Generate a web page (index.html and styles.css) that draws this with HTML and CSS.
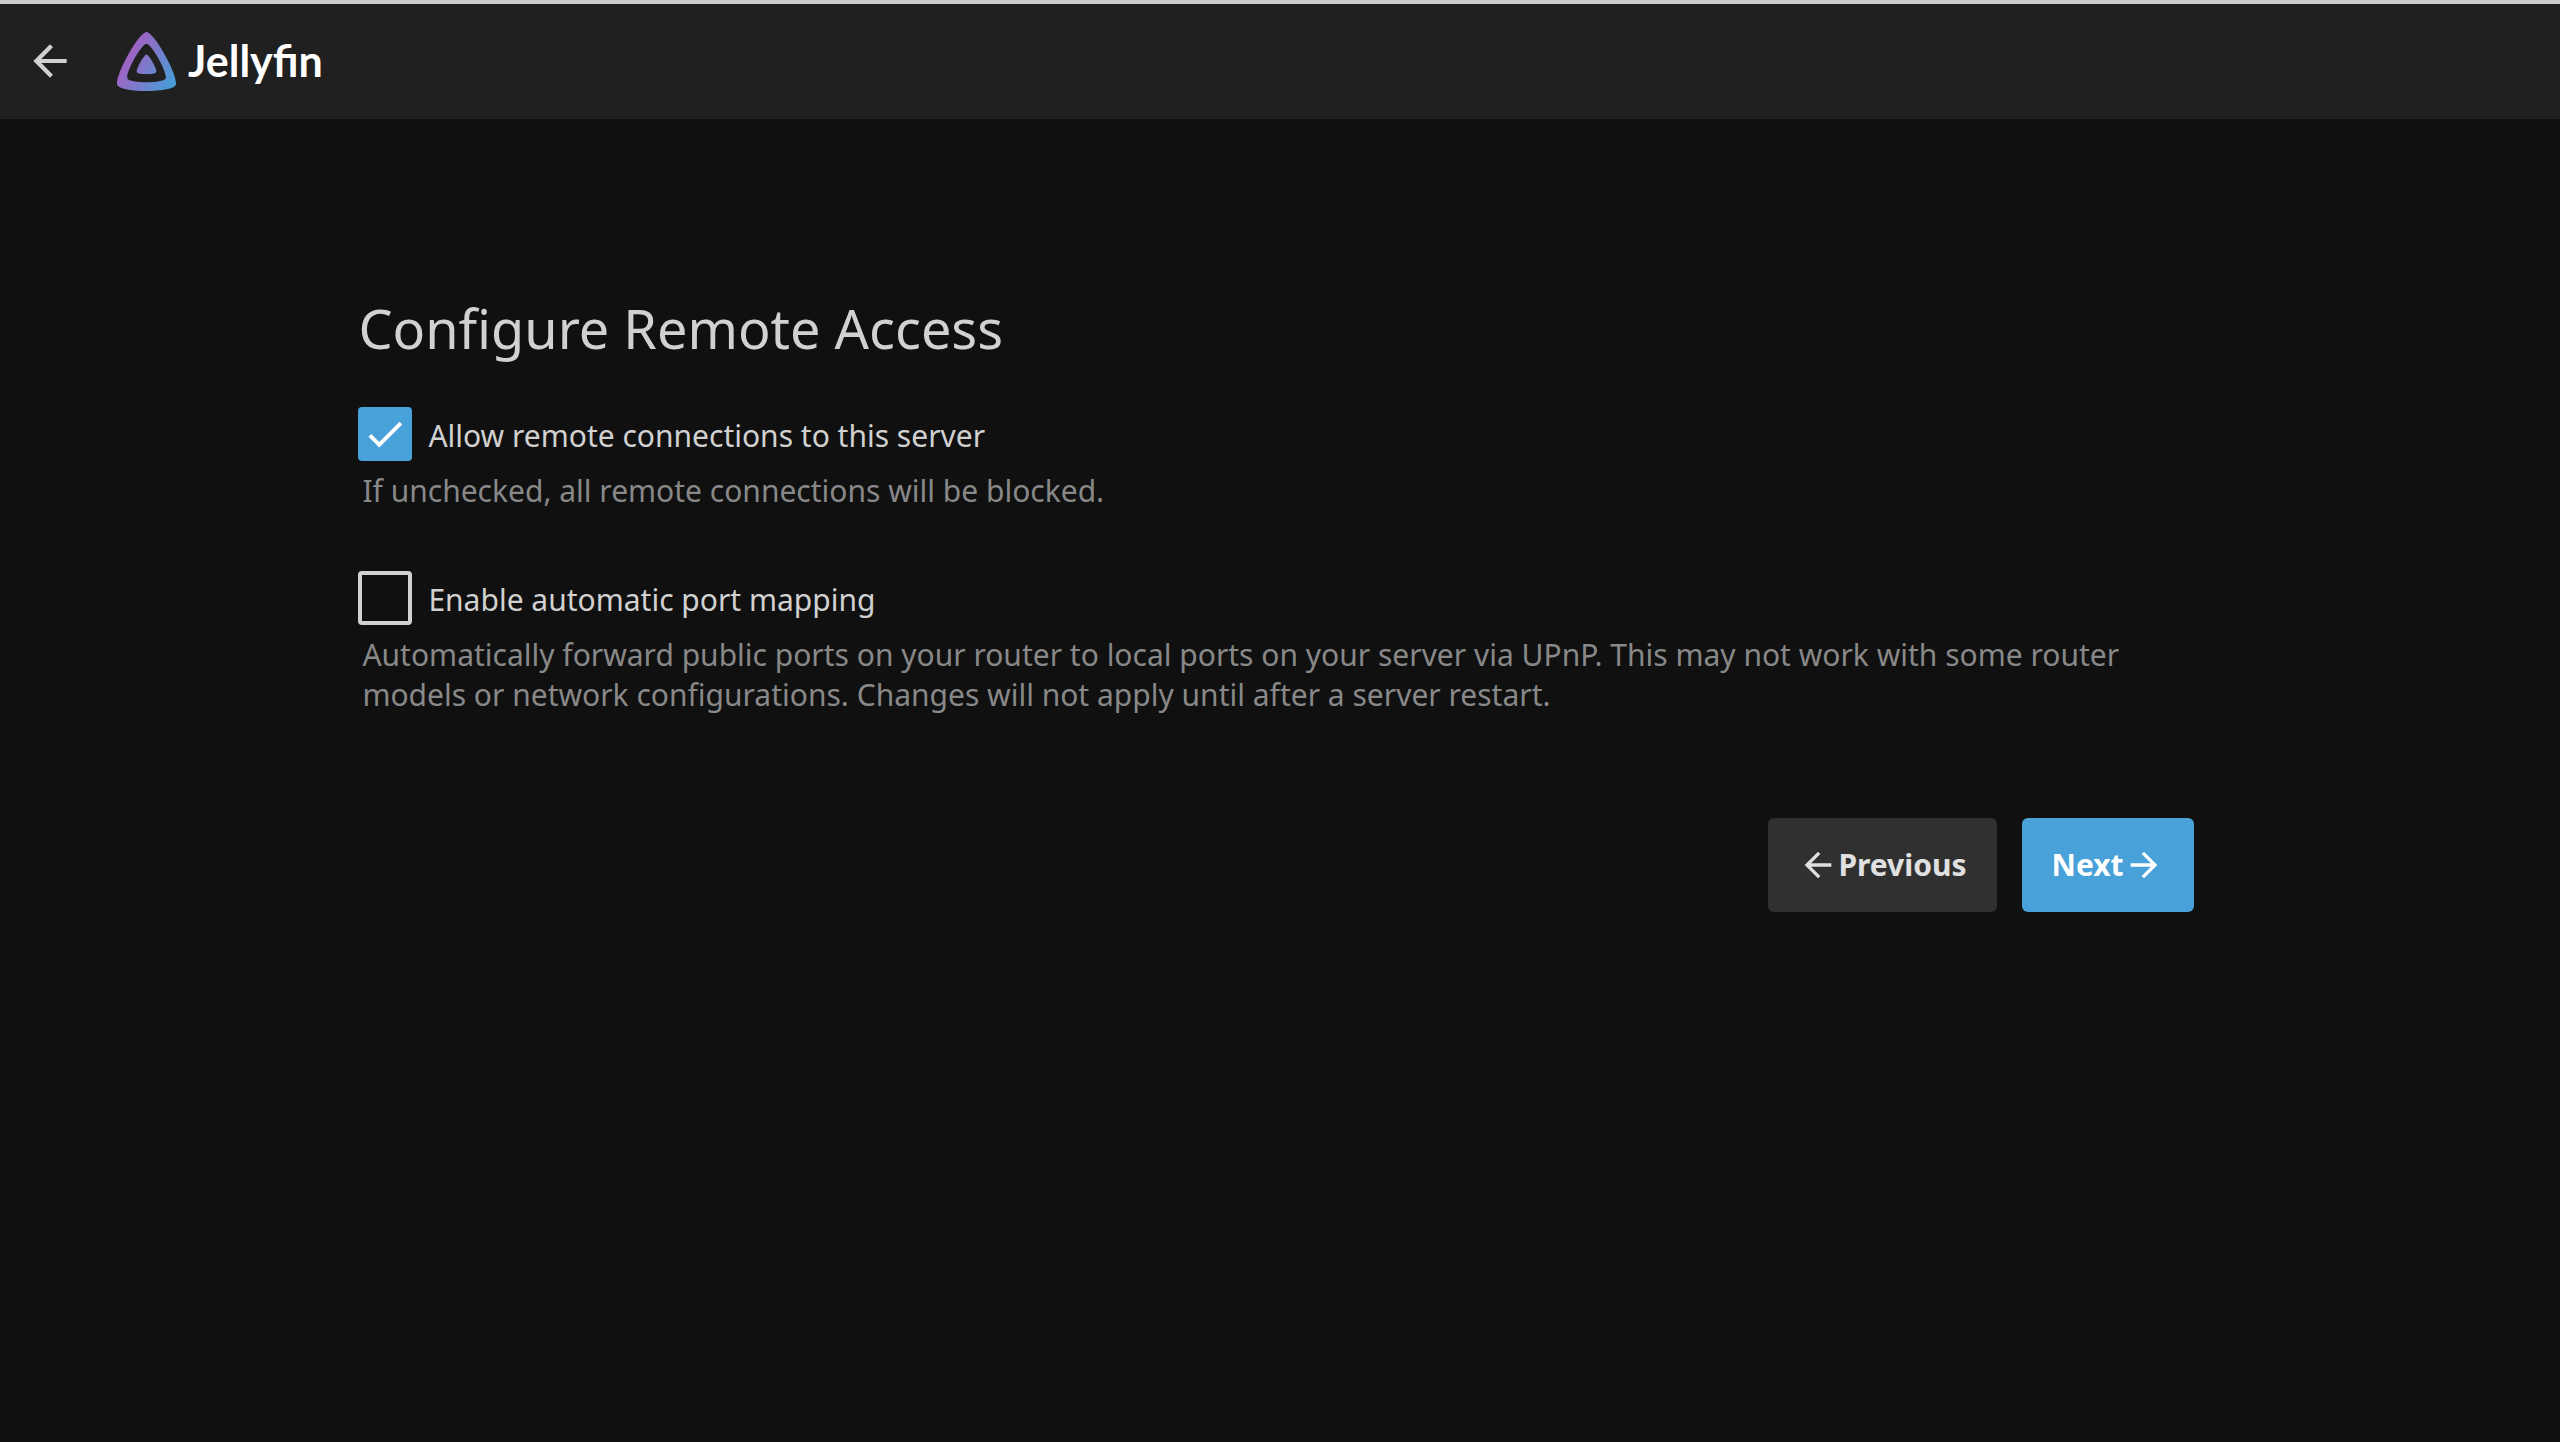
FILE: index.html
```html
<!DOCTYPE html>
<html lang="en">
<head>
<meta charset="utf-8">
<title>Jellyfin</title>
<meta name="viewport" content="width=device-width, initial-scale=1">
<link rel="stylesheet" href="styles.css">
</head>
<body>
<header class="header">
  <button class="back" type="button" aria-label="Back">
    <svg class="back-icon" viewBox="0 0 24 24" aria-hidden="true"><path d="M20 11H7.83l5.59-5.59L12 4l-8 8 8 8 1.41-1.41L7.83 13H20v-2z"/></svg>
  </button>
  <a class="brand" href="#">
    <svg class="brand-icon" viewBox="56 56 400 400" aria-hidden="true">
      <defs>
        <linearGradient id="brand-gradient" gradientUnits="userSpaceOnUse" x1="110.25" y1="213.3" x2="496.14" y2="436.09">
          <stop offset="0" stop-color="#a55fc2"/>
          <stop offset="1" stop-color="#38a7dc"/>
        </linearGradient>
      </defs>
      <path fill="url(#brand-gradient)" d="M190.56 329.07c8.63 17.3 122.4 17.12 130.93 0 8.52-17.1-47.9-119.78-65.46-119.8-17.57 0-74.1 102.5-65.47 119.8z"/>
      <path fill="url(#brand-gradient)" d="M58.75 417.03c25.97 52.15 368.86 51.55 394.55 0S308.93 56.08 256.03 56.08c-52.92 0-223.25 308.8-197.28 360.95zm68.04-45.25c-17.02-34.17 94.6-236.5 129.26-236.5 34.67 0 146.1 202.7 129.26 236.5-16.83 33.8-241.5 34.17-258.52 0z"/>
    </svg>
    <span class="brand-name">Jellyfin</span>
  </a>
</header>
<main class="page">
  <form class="wizard">
    <h1 class="title">Configure Remote Access</h1>
    <div class="field">
      <label class="option">
        <input class="option-input" type="checkbox" checked aria-describedby="remote-help">
        <span class="option-box"><svg class="option-check" viewBox="0 0 24 24" aria-hidden="true"><path d="M9 16.17L4.83 12l-1.42 1.41L9 19 21 7l-1.41-1.41z"/></svg></span>
        <span class="option-label">Allow remote connections to this server</span>
      </label>
      <p class="help" id="remote-help">If unchecked, all remote connections will be blocked.</p>
    </div>
    <div class="field">
      <label class="option">
        <input class="option-input" type="checkbox" aria-describedby="mapping-help">
        <span class="option-box"><svg class="option-check" viewBox="0 0 24 24" aria-hidden="true"><path d="M9 16.17L4.83 12l-1.42 1.41L9 19 21 7l-1.41-1.41z"/></svg></span>
        <span class="option-label">Enable automatic port mapping</span>
      </label>
      <p class="help" id="mapping-help">Automatically forward public ports on your router to local ports on your server via UPnP. This may not work with some router models or network configurations. Changes will not apply until after a server restart.</p>
    </div>
    <div class="actions">
      <button class="button" type="button">
        <svg class="button-icon" viewBox="0 0 24 24" aria-hidden="true"><path d="M20 11H7.83l5.59-5.59L12 4l-8 8 8 8 1.41-1.41L7.83 13H20v-2z"/></svg>
        <span>Previous</span>
      </button>
      <button class="button button-next" type="submit">
        <span>Next</span>
        <svg class="button-icon" viewBox="0 0 24 24" aria-hidden="true"><path d="M12 4l-1.41 1.41L16.17 11H4v2h12.17l-5.58 5.59L12 20l8-8z"/></svg>
      </button>
    </div>
  </form>
</main>
</body>
</html>
```
FILE: styles.css
```css
* {
  box-sizing: border-box;
}

body {
  margin: 0;
  min-height: 100vh;
  background: #101010;
  color: #d1d1d1;
  font: 30px/40px "Noto Sans", sans-serif;
}

.header {
  display: flex;
  align-items: center;
  gap: 33px;
  padding: 23px 16px 24px;
  border-top: 4px solid #cccccc;
  background: #202020;
}

.back {
  display: flex;
  padding: 9px;
  border: 0;
  background: none;
  color: inherit;
}

.back-icon {
  width: 50px;
  height: 50px;
  fill: currentColor;
}

.brand {
  display: flex;
  align-items: center;
  gap: 12px;
  color: #ffffff;
  text-decoration: none;
}

.brand-icon {
  width: 59px;
  height: 59px;
}

.brand-name {
  font: bold 43px/60px Lato, sans-serif;
}

.page {
  padding: 176px 14% 60px;
}

.title {
  margin: 0 0 45px;
  font-size: 54px;
  font-weight: 400;
  line-height: 66px;
}

.field {
  margin-bottom: 59px;
}

.option {
  display: flex;
  align-items: center;
  gap: 16px;
  height: 56px;
}

.option-input {
  position: absolute;
  opacity: 0;
}

.option-box {
  display: flex;
  align-items: center;
  justify-content: center;
  width: 54px;
  height: 54px;
  border: 4px solid currentColor;
  border-radius: 4px;
}

.option-label {
  padding-top: 4px;
}

.option-check {
  display: none;
  width: 46px;
  height: 46px;
  fill: #ffffff;
}

.option-input:checked + .option-box {
  border-color: #48a1d8;
  background: #48a1d8;
}

.option-input:checked + .option-box .option-check {
  display: block;
}

.help {
  margin: 9px 4px 0;
  color: #888888;
}

.actions {
  display: flex;
  justify-content: flex-end;
  gap: 25px;
  padding: 44px 8px 0 0;
}

.button {
  display: flex;
  align-items: center;
  padding: 27px 30px;
  border: 0;
  border-radius: 6px;
  background: #303030;
  color: #e0e0e0;
  font: bold 30px/40px "Noto Sans", sans-serif;
}

.button-next {
  background: #48a1d8;
  color: #ffffff;
}

.button-icon {
  width: 40px;
  height: 40px;
  fill: currentColor;
}
```
